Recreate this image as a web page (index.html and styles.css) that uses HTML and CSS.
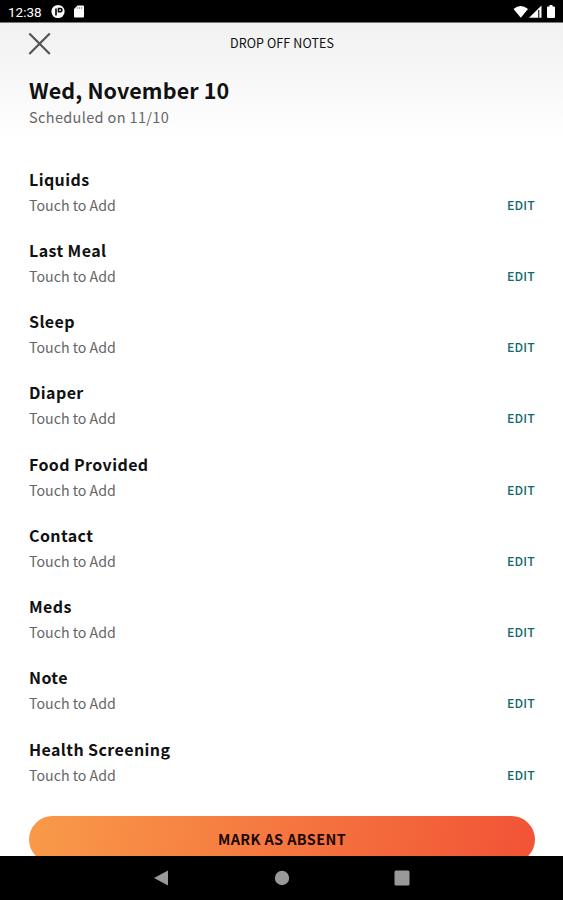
FILE: index.html
```html
<!DOCTYPE html>
<html lang="en">
  <head>
    <meta charset="UTF-8" />
    <title>Drop Off Notes</title>
    <link rel="stylesheet" href="styles.css">
  </head>
  <body>
    <div class="status-bar">
      <span class="clock">12:38</span>
      <svg class="status-left" width="36" height="16" viewBox="0 0 36 16">
        <circle cx="7" cy="7.500" r="6.600" fill="#fff" />
        <path d="M5 11.500V4.500M7.500 8.500V4.500h1.800a1.600 1.600 0 0 1 0 3.200H7.500" fill="none" stroke="#000" stroke-width="1.600" />
        <path d="M26.500 1.500H32a1 1 0 0 1 1 1v10a1 1 0 0 1-1 1h-8a1 1 0 0 1-1-1V5z" fill="#fff" />
        <path d="M26.200 3v2M28.400 3v2M30.600 3v2" stroke="#777" stroke-width=".8" />
      </svg>
      <svg class="status-right" width="44" height="16" viewBox="0 0 44 16">
        <path d="M1.500 5Q8.500-.8 16 5L8.800 13.800z" fill="#fff" />
        <path d="M29.500 1.500V13.800H17z" fill="#fff" />
        <path d="M26.700 6v8" stroke="#333" stroke-width="1.300" />
        <path d="M37.500 1h3v1.500H42a1 1 0 0 1 1 1V13a1 1 0 0 1-1 1h-6a1 1 0 0 1-1-1V3.500a1 1 0 0 1 1-1h1.500z" fill="#fff" />
      </svg>
    </div>

    <main class="screen">
      <header class="header">
        <div class="toolbar">
          <svg class="close" width="23" height="22" viewBox="0 0 23 22">
            <path d="M1.300 .5l20.500 20.500M21.800 .5L1.300 21" stroke="#555" stroke-width="2.200" />
          </svg>
          <span class="toolbar-title">DROP OFF NOTES</span>
        </div>
        <h1>Wed, November 10</h1>
        <p class="scheduled">Scheduled on 11/10</p>
      </header>

      <ul class="notes">
        <li class="note"><h2>Liquids</h2><p>Touch to Add</p><a class="edit">EDIT</a></li>
        <li class="note"><h2>Last Meal</h2><p>Touch to Add</p><a class="edit">EDIT</a></li>
        <li class="note"><h2>Sleep</h2><p>Touch to Add</p><a class="edit">EDIT</a></li>
        <li class="note"><h2>Diaper</h2><p>Touch to Add</p><a class="edit">EDIT</a></li>
        <li class="note"><h2>Food Provided</h2><p>Touch to Add</p><a class="edit">EDIT</a></li>
        <li class="note"><h2>Contact</h2><p>Touch to Add</p><a class="edit">EDIT</a></li>
        <li class="note"><h2>Meds</h2><p>Touch to Add</p><a class="edit">EDIT</a></li>
        <li class="note"><h2>Note</h2><p>Touch to Add</p><a class="edit">EDIT</a></li>
        <li class="note"><h2>Health Screening</h2><p>Touch to Add</p><a class="edit">EDIT</a></li>
      </ul>

      <button class="absent">MARK AS ABSENT</button>
    </main>

    <nav class="nav-bar">
      <svg width="16" height="16" viewBox="0 0 16 16"><path d="M0 8L14 .5v15z" fill="#999" /></svg>
      <svg width="16" height="16" viewBox="0 0 16 16"><circle cx="8" cy="8" r="7.200" fill="#999" /></svg>
      <svg width="16" height="16" viewBox="0 0 16 16"><rect x=".5" y=".5" width="15" height="15" rx="1.500" fill="#999" /></svg>
    </nav>
  </body>
</html>
```
FILE: styles.css
```css
* {
  box-sizing: border-box;
}

body {
  margin: 0;
  height: 900px;
  display: flex;
  flex-direction: column;
  overflow: hidden;
  background: #fff;
  color: #111;
  font-family: "Noto Sans CJK SC", "Open Sans", sans-serif;
}

h1,
h2,
p,
ul {
  margin: 0;
  padding: 0;
}

.status-bar {
  flex: none;
  display: flex;
  align-items: center;
  height: 23px;
  padding: 1px 7px 0 8px;
  background: #000;
  border-bottom: 1px solid #777;
}

.clock {
  width: 43px;
  color: #fff;
  font-family: Roboto, sans-serif;
  font-size: 13.5px;
}

.status-right {
  margin-left: auto;
}

.screen {
  flex: 1;
  min-height: 0;
  overflow: hidden;
}

.header {
  height: 142.6px;
  padding: 0 28px;
  background: linear-gradient(#f1f1f1, #fff 118px);
}

.toolbar {
  display: grid;
  grid-template-columns: 23px 1fr 22px;
  align-items: center;
  height: 40px;
}

.close {
  margin-top: 1px;
}

.toolbar-title {
  padding-bottom: 1px;
  text-align: center;
  font-size: 12.5px;
  letter-spacing: 0.1px;
}

h1 {
  margin: 11px 0 0 1px;
  font-size: 21.5px;
  font-weight: 700;
  letter-spacing: 0.1px;
  line-height: 32px;
}

.scheduled {
  margin-left: 1px;
  color: #666;
  font-size: 14.5px;
  letter-spacing: 0.35px;
  line-height: 22px;
}

.notes {
  list-style: none;
  padding: 0 28px 0 29px;
}

.note {
  display: grid;
  grid-template-columns: 1fr auto;
  grid-template-rows: 26px 26px;
  align-items: center;
  height: 71.25px;
}

.note h2 {
  grid-column: 1 / 3;
  font-size: 16px;
  font-weight: 700;
  letter-spacing: 0.4px;
  line-height: 26px;
}

.note p {
  color: #666;
  font-size: 14.2px;
  line-height: 26px;
}

.edit {
  color: #12696a;
  font-size: 12.3px;
  font-weight: 500;
  letter-spacing: 0.2px;
  line-height: 26px;
}

.absent {
  display: block;
  width: 506px;
  height: 47px;
  margin: 9px 0 0 29px;
  padding: 0 0 2px;
  border: none;
  border-radius: 24px;
  background: linear-gradient(100deg, #f99a49, #f15336);
  color: #1c0904;
  font-family: inherit;
  font-size: 14.5px;
  font-weight: 700;
  letter-spacing: 0.35px;
}

.nav-bar {
  flex: none;
  display: flex;
  justify-content: center;
  align-items: center;
  gap: 104px;
  height: 44px;
  background: #000;
}
```
